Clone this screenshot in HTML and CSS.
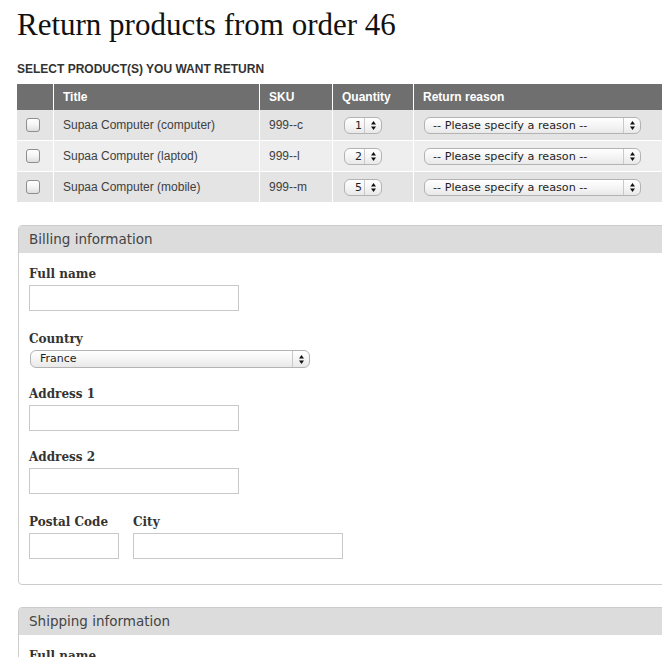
FILE: index.html
```html
<!DOCTYPE html>
<html lang="en">
<head>
<meta charset="utf-8">
<title>Return products from order 46</title>
<link rel="stylesheet" href="styles.css">
</head>
<body>
<div class="page">
  <h1 class="title">Return products from order 46</h1>
  <h2 class="subtitle">SELECT PRODUCT(S) YOU WANT RETURN</h2>

  <table class="products">
    <thead>
      <tr>
        <th class="c-check"></th>
        <th class="c-title">Title</th>
        <th class="c-sku">SKU</th>
        <th class="c-qty">Quantity</th>
        <th class="c-reason">Return reason</th>
      </tr>
    </thead>
    <tbody>
      <tr class="odd">
        <td class="c-check"><span class="checkbox"></span></td>
        <td>Supaa Computer (computer)</td>
        <td>999--c</td>
        <td><div class="select qty"><span class="select-text">1</span><span class="select-arrow"><svg width="7" height="11" viewBox="0 0 7 11"><polygon points="1,4.5 3.5,1 6,4.5"/><polygon points="1,6.5 3.5,10 6,6.5"/></svg></span></div></td>
        <td><div class="select reason"><span class="select-text">-- Please specify a reason --</span><span class="select-arrow"><svg width="7" height="11" viewBox="0 0 7 11"><polygon points="1,4.5 3.5,1 6,4.5"/><polygon points="1,6.5 3.5,10 6,6.5"/></svg></span></div></td>
      </tr>
      <tr class="even">
        <td class="c-check"><span class="checkbox"></span></td>
        <td>Supaa Computer (laptod)</td>
        <td>999--l</td>
        <td><div class="select qty"><span class="select-text">2</span><span class="select-arrow"><svg width="7" height="11" viewBox="0 0 7 11"><polygon points="1,4.5 3.5,1 6,4.5"/><polygon points="1,6.5 3.5,10 6,6.5"/></svg></span></div></td>
        <td><div class="select reason"><span class="select-text">-- Please specify a reason --</span><span class="select-arrow"><svg width="7" height="11" viewBox="0 0 7 11"><polygon points="1,4.5 3.5,1 6,4.5"/><polygon points="1,6.5 3.5,10 6,6.5"/></svg></span></div></td>
      </tr>
      <tr class="odd">
        <td class="c-check"><span class="checkbox"></span></td>
        <td>Supaa Computer (mobile)</td>
        <td>999--m</td>
        <td><div class="select qty"><span class="select-text">5</span><span class="select-arrow"><svg width="7" height="11" viewBox="0 0 7 11"><polygon points="1,4.5 3.5,1 6,4.5"/><polygon points="1,6.5 3.5,10 6,6.5"/></svg></span></div></td>
        <td><div class="select reason"><span class="select-text">-- Please specify a reason --</span><span class="select-arrow"><svg width="7" height="11" viewBox="0 0 7 11"><polygon points="1,4.5 3.5,1 6,4.5"/><polygon points="1,6.5 3.5,10 6,6.5"/></svg></span></div></td>
      </tr>
    </tbody>
  </table>

  <section class="panel">
    <div class="panel-head">Billing information</div>
    <div class="panel-body">
      <div class="field field-loose">
        <label class="label">Full name</label>
        <div class="input wide"></div>
      </div>
      <div class="field">
        <label class="label label-tight">Country</label>
        <div class="select country"><span class="select-text">France</span><span class="select-arrow"><svg width="7" height="11" viewBox="0 0 7 11"><polygon points="1,4.5 3.5,1 6,4.5"/><polygon points="1,6.5 3.5,10 6,6.5"/></svg></span></div>
      </div>
      <div class="field">
        <label class="label">Address 1</label>
        <div class="input wide"></div>
      </div>
      <div class="field field-loose">
        <label class="label">Address 2</label>
        <div class="input wide"></div>
      </div>
      <div class="field-row">
        <div class="field">
          <label class="label">Postal Code</label>
          <div class="input short"></div>
        </div>
        <div class="field">
          <label class="label">City</label>
          <div class="input wide"></div>
        </div>
      </div>
    </div>
  </section>

  <section class="panel">
    <div class="panel-head">Shipping information</div>
    <div class="panel-body">
      <div class="field field-loose">
        <label class="label">Full name</label>
        <div class="input wide"></div>
      </div>
      <div class="field">
        <label class="label label-tight">Country</label>
        <div class="select country"><span class="select-text">France</span><span class="select-arrow"><svg width="7" height="11" viewBox="0 0 7 11"><polygon points="1,4.5 3.5,1 6,4.5"/><polygon points="1,6.5 3.5,10 6,6.5"/></svg></span></div>
      </div>
    </div>
  </section>
</div>
</body>
</html>
```

FILE: styles.css
```css
html {
  overflow: hidden;
  background: #fff;
}

body {
  margin: 0;
  background: #fff;
}

.page {
  width: 720px;
  padding: 0 0 0 17px;
}

.title {
  margin: 7px 0 0;
  font-family: "Liberation Serif", "Times New Roman", serif;
  font-weight: normal;
  font-size: 31px;
  line-height: 36px;
  color: #111;
}

.subtitle {
  margin: 18px 0 7px;
  font-family: "Liberation Sans", Arial, sans-serif;
  font-weight: bold;
  font-size: 12px;
  line-height: 16px;
  color: #333;
}

.products {
  width: 700px;
  table-layout: fixed;
  border-collapse: separate;
  border-spacing: 0;
  font-family: "Liberation Sans", Arial, sans-serif;
  font-size: 12px;
  color: #404040;
}

.products th {
  box-sizing: border-box;
  height: 26px;
  padding: 0 9px;
  background: #6f6f6f;
  color: #fff;
  font-weight: bold;
  text-align: left;
  border-left: 1px solid #fff;
}

.products td {
  box-sizing: border-box;
  height: 31px;
  padding: 0 9px;
  border-left: 1px solid #fff;
  border-bottom: 1px solid #fff;
  vertical-align: middle;
}

.products .c-check {
  border-left: none;
}

.products th.c-check { width: 36px; }
.products th.c-title { width: 206px; }
.products th.c-sku { width: 73px; }
.products th.c-qty { width: 81px; }
.products th.c-reason { width: 304px; }

.products tr.odd td { background: #e4e4e4; }
.products tr.even td { background: #eeeeee; }

.checkbox {
  display: block;
  width: 12px;
  height: 12px;
  border: 1px solid #8e8e8e;
  border-radius: 3px;
  background: linear-gradient(#ffffff, #f4f4f4 50%, #dedede);
  box-shadow: inset 0 1px 0 #fff;
}

.select {
  display: flex;
  align-items: stretch;
  box-sizing: border-box;
  height: 17px;
  border: 1px solid #b3b3b3;
  border-radius: 6px;
  background: linear-gradient(#ffffff, #f6f6f6 45%, #e9e9e9);
  font-family: "DejaVu Sans", "Liberation Sans", sans-serif;
  font-size: 11px;
  line-height: 15px;
  color: #1e1e1e;
  white-space: nowrap;
  overflow: hidden;
}

.select-text {
  flex: 1;
  padding-left: 8px;
}

.select-arrow {
  display: flex;
  align-items: center;
  justify-content: center;
  width: 16px;
  border-left: 1px solid #c9c9c9;
}

.select-arrow svg {
  fill: #111;
}

.select.qty {
  width: 38px;
  margin-left: 2px;
}

.select.qty .select-text {
  padding-left: 10px;
}

.select.reason {
  width: 217px;
  margin-left: 1px;
  font-size: 11.2px;
}

.select.country {
  width: 280px;
  height: 18px;
  margin-left: 1px;
  line-height: 16px;
}

.select.country .select-text {
  padding-left: 9px;
}

.panel {
  width: 700px;
  margin: 22px 0 0 1px;
  border: 1px solid #cccccc;
  border-radius: 4px;
  overflow: hidden;
}

.panel-head {
  height: 27px;
  padding-left: 10px;
  background: #dcdcdc;
  font-family: "DejaVu Sans", "Liberation Sans", sans-serif;
  font-size: 13.5px;
  line-height: 27px;
  color: #444;
}

.panel-body {
  padding: 13px 10px 25px;
}

.field {
  margin-bottom: 18px;
}

.field.field-loose {
  margin-bottom: 20px;
}

.field-row {
  display: flex;
  gap: 14px;
}

.field-row .field {
  margin-bottom: 0;
}

.label {
  display: block;
  margin-bottom: 3px;
  font-family: "DejaVu Serif", Georgia, serif;
  font-weight: bold;
  font-size: 12px;
  line-height: 16px;
  color: #333;
}

.label.label-tight {
  margin-bottom: 3px;
}

.input {
  box-sizing: border-box;
  height: 26px;
  border: 1px solid #c9c9c9;
  background: #fff;
}

.input.wide { width: 210px; }
.input.short { width: 90px; }
```
